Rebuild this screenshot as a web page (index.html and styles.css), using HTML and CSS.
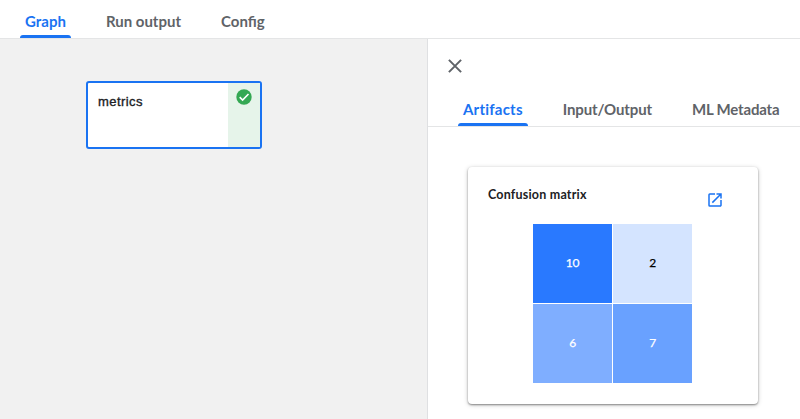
FILE: index.html
```html
<!DOCTYPE html>
<html lang="en">
<head>
<meta charset="utf-8">
<title>Run graph</title>
<link rel="stylesheet" href="styles.css">
</head>
<body>
<nav class="tabs tabs-main">
  <a class="tab active">Graph</a>
  <a class="tab">Run output</a>
  <a class="tab">Config</a>
</nav>
<main class="workspace">
  <section class="canvas">
    <div class="node">
      <span class="node-name">metrics</span>
      <span class="node-status">
        <svg width="16" height="16" viewBox="0 0 16 16"><circle cx="8" cy="8" r="7.7" fill="#34a853"/><path d="M3.700 8.100l2.900 2.900 5.900-6" fill="none" stroke="#fff" stroke-width="1.600"/></svg>
      </span>
    </div>
  </section>
  <aside class="panel">
    <div class="panel-head">
      <svg class="close" width="14" height="14" viewBox="0 0 14 14"><path d="M.9.9l12.2 12.2M13.1.9L.9 13.1" fill="none" stroke="#5f6368" stroke-width="2"/></svg>
    </div>
    <nav class="tabs tabs-side">
      <a class="tab active artifacts">Artifacts</a>
      <a class="tab io">Input/Output</a>
      <a class="tab metadata">ML Metadata</a>
    </nav>
    <article class="card">
      <header class="card-head">
        <h2>Confusion matrix</h2>
        <svg class="open" width="18" height="18" viewBox="0 0 24 24"><path fill="#1a73f2" d="M19 19H5V5h7V3H5a2 2 0 0 0-2 2v14a2 2 0 0 0 2 2h14c1.100 0 2-.9 2-2v-7h-2v7zM14 3v2h3.590l-9.830 9.830 1.410 1.410L19 6.410V10h2V3h-7z"/></svg>
      </header>
      <div class="matrix">
        <span class="cell c10">10</span><span class="cell c2">2</span>
        <span class="cell c6">6</span><span class="cell c7">7</span>
      </div>
    </article>
  </aside>
</main>
</body>
</html>
```
FILE: styles.css
```css
* { box-sizing: border-box; }
body {
  margin: 0;
  height: 419px;
  overflow: hidden;
  display: flex;
  flex-direction: column;
  background: #fff;
  color: #202124;
  font-family: Lato, "Open Sans", sans-serif;
}
.tabs {
  display: flex;
  gap: 30px;
  border-bottom: 1px solid #e4e5e6;
}
.tab {
  display: flex;
  flex-direction: column;
  justify-content: flex-end;
  padding: 0 5px;
  color: #5f6368;
  font-size: 15px;
  font-weight: 700;
  line-height: 18px;
  white-space: nowrap;
}
.tab::after {
  content: "";
  height: 3px;
  margin: 5px -5px 0;
}
.tab.active { color: #1a73f2; }
.tab.active::after {
  background: #1a73f2;
  border-radius: 3px 3px 0 0;
}
.artifacts { letter-spacing: .22px; }
.io { letter-spacing: -.13px; }
.metadata { letter-spacing: -.18px; }
.tabs-main { flex: none; height: 39px; padding-left: 20px; }
.workspace { flex: 1; display: flex; min-height: 0; }
.canvas { width: 428px; padding: 42px 0 0 86px; background: #f1f1f1; border-right: 1px solid #dfe0e2; }
.node {
  display: flex;
  width: 176px;
  height: 68px;
  border: 2px solid #1a73f2;
  border-radius: 3px;
  background: #fff;
}
.node-name {
  flex: 1;
  padding: 11px 0 0 10px;
  font: 400 13px/16px "Liberation Sans", sans-serif;
  letter-spacing: .42px;
  -webkit-text-stroke: .35px #202124;
}
.node-status { width: 32px; padding: 6px 0 0 8px; background: #e6f4ea; }
svg { display: block; }
.panel { flex: 1; min-width: 0; }
.panel-head { height: 48px; padding: 20px 0 0 20px; }
.tabs-side { height: 40px; padding-left: 30px; }
.card {
  width: 290px;
  height: 237px;
  margin: 40px 0 0 40px;
  border-radius: 4px;
  box-shadow: 0 1px 2px rgba(0,0,0,.4), 0 1px 5px rgba(0,0,0,.2);
}
.card-head { display: flex; justify-content: space-between; height: 57px; padding: 20px 34px 0 20px; }
.card-head h2 { margin: 0; font-size: 12.5px; line-height: 16px; font-weight: 700; letter-spacing: .2px; }
.open { margin-top: 4px; }
.matrix {
  display: grid;
  grid-template-columns: 79px 79px;
  grid-template-rows: 79px 79px;
  gap: 1px;
  margin-left: 65px;
}
.cell { display: flex; align-items: center; justify-content: center; padding-bottom: 2px; color: #fff; font-size: 12px; letter-spacing: -.3px; -webkit-text-stroke: .25px currentColor; }
.c10 { background: #2979ff; }
.c2 { background: #d4e4ff; color: #000; }
.c6 { background: #7faeff; }
.c7 { background: #69a1ff; }
```
